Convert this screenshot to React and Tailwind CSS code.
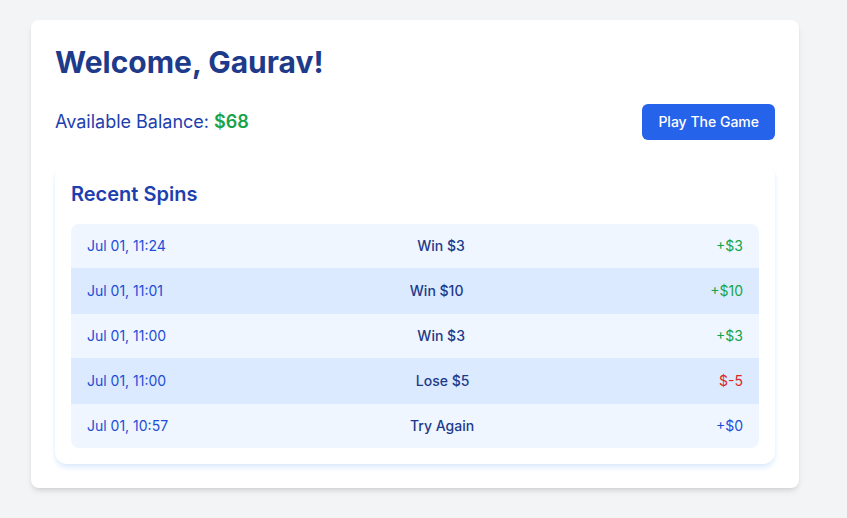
import React from 'react';

const spins = [
  { date: 'Jul 01, 11:24', result: 'Win $3', amount: '+$3', tone: 'text-[#16a34a]', alt: false },
  { date: 'Jul 01, 11:01', result: 'Win $10', amount: '+$10', tone: 'text-[#16a34a]', alt: true },
  { date: 'Jul 01, 11:00', result: 'Win $3', amount: '+$3', tone: 'text-[#16a34a]', alt: false },
  { date: 'Jul 01, 11:00', result: 'Lose $5', amount: '$-5', tone: 'text-[#dc2626]', alt: true },
  { date: 'Jul 01, 10:57', result: 'Try Again', amount: '+$0', tone: 'text-[#1d4ed8]', alt: false },
];

export default function App() {
  return (
    <div className="min-h-screen bg-[#f3f4f6] pt-5 pl-[31px] font-['Inter',sans-serif]">
      <div className="w-[768px] bg-white rounded-lg shadow-md p-6">
        <h1 className="text-3xl font-bold text-[#1e3a8a]">Welcome, Gaurav!</h1>

        <div className="mt-6 flex items-center justify-between">
          <p className="text-lg text-[#1e40af]">
            Available Balance: <span className="font-semibold text-[#16a34a]">$68</span>
          </p>
          <button className="bg-[#2563eb] text-white text-sm font-medium px-4 py-2 rounded-md">
            Play The Game
          </button>
        </div>

        <div className="mt-6 bg-white rounded-xl shadow-md shadow-[#dbeafe] p-4">
          <h2 className="text-xl font-semibold text-[#1e40af] mb-4">Recent Spins</h2>
          <div className="rounded-lg overflow-hidden text-sm">
            {spins.map((s, i) => (
              <div
                key={i}
                className={`flex items-center justify-between px-4 ${
                  s.alt ? 'bg-[#dbeafe] h-[46px]' : 'bg-[#eff6ff] h-[44px]'
                }`}
              >
                <span className="text-[#1d4ed8]">{s.date}</span>
                <span className="font-medium text-[#1e3a8a]">{s.result}</span>
                <span className={s.tone}>{s.amount}</span>
              </div>
            ))}
          </div>
        </div>
      </div>
    </div>
  );
}
